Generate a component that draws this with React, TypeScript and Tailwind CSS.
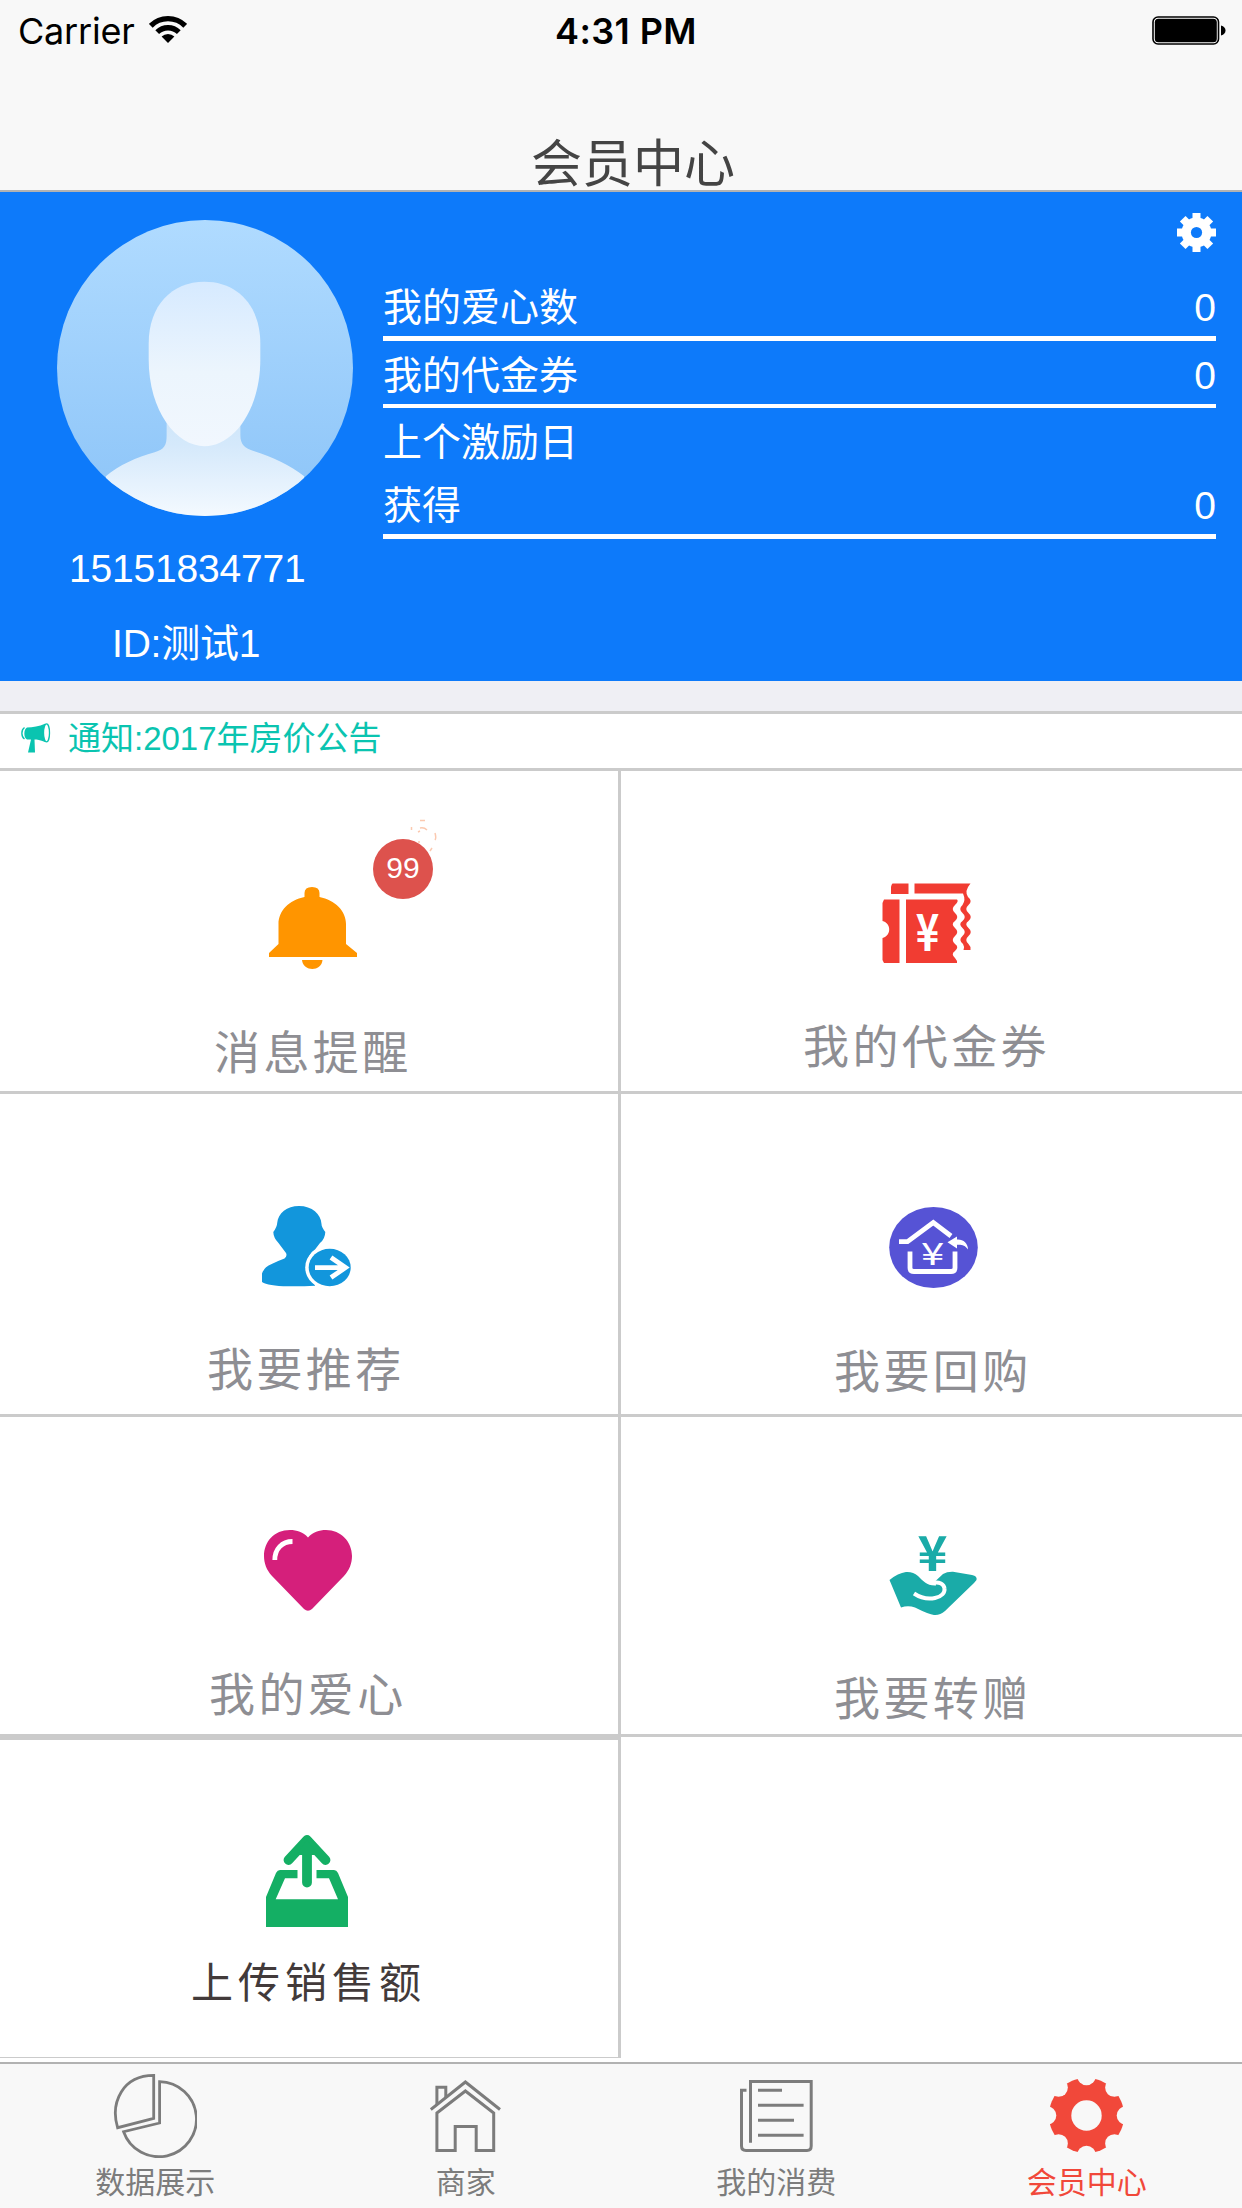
import React from 'react';

const WifiIcon = () => (
  <svg width="38" height="27" viewBox="0 0 38 27" className="mt-4 ml-[14px]">
    <path d="M1.8 9.8A24.3 24.3 0 0 1 36.2 9.8M8.2 16.2A15.3 15.3 0 0 1 29.8 16.2" fill="none" stroke="#000" strokeWidth="5.3" />
    <path d="M12.6 20.6A9 9 0 0 1 25.4 20.6L19 27Z" />
  </svg>
);

const BatteryIcon = () => (
  <svg width="74" height="29" viewBox="0 0 74 29" className="mt-4 ml-auto mr-[16px]">
    <rect x="1" y="1" width="65.5" height="27" rx="5" fill="#fff" stroke="#000" strokeWidth="1.6" />
    <rect x="2.8" y="2.8" width="62" height="23.4" rx="3.5" />
    <path d="M69 9.5C72 10.5 73.5 12 73.5 14.5S72 18.5 69 19.5Z" />
  </svg>
);

const Avatar = () => (
  <svg width="296" height="296" viewBox="0 0 297 297" className="ml-[57px] mt-[28px]">
    <defs>
      <linearGradient id="sky" x1="0" y1="0" x2="0" y2="1">
        <stop offset="0" stopColor="#b0dbff" />
        <stop offset="1" stopColor="#8cc4f8" />
      </linearGradient>
      <linearGradient id="face" x1="0" y1="0" x2="0" y2="1">
        <stop offset="0" stopColor="#d6eaff" />
        <stop offset="0.55" stopColor="#ecf5fd" />
        <stop offset="1" stopColor="#f1f7fe" />
      </linearGradient>
      <linearGradient id="body" x1="0" y1="0" x2="0" y2="1">
        <stop offset="0" stopColor="#cde5fa" />
        <stop offset="0.3" stopColor="#d5e9fb" />
        <stop offset="1" stopColor="#f5faff" />
      </linearGradient>
      <clipPath id="round">
        <circle cx="148.5" cy="148.5" r="148.5" />
      </clipPath>
    </defs>
    <g clipPath="url(#round)">
      <rect width="297" height="297" fill="url(#sky)" />
      <path d="M110 195V216C110 226 108 230 98 233C80 238 62 246 49 257V300H248V257C234 246 216 238 198 232C188 229 184 225 184 216V195Z" fill="url(#body)" />
      <path d="M148 62C181 62 204 86 204 124V140C204 192 176 227 148 227S92 192 92 140V124C92 86 115 62 148 62Z" fill="url(#face)" />
    </g>
  </svg>
);

const SettingsIcon = () => (
  <svg width="39" height="39" viewBox="-19.5 -19.5 39 39" className="ml-auto" fill="#fff">
    {[0, 45, 90, 135].map((deg) => (
      <rect key={deg} x="-4" y="-19.5" width="8" height="39" transform={`rotate(${deg})`} />
    ))}
    <circle r="15" />
    <circle r="5.6" fill="#0d7afa" />
  </svg>
);

const HornIcon = () => (
  <svg width="30" height="30" viewBox="0 0 30 30" className="ml-[21px] mt-[9px]" fill="#0ac4b0">
    <path d="M6 4.5C12 4.5 18 3.5 24 0.8V19C19 17 16 16.5 13.500 16.5L14 29.5H7L10 16.5H6C2.500 15 2.500 6 6 4.5Z" />
    <path d="M3.500 4.5C0 7 0 13.5 3.500 16" fill="none" stroke="#0ac4b0" strokeWidth="1.4" />
    <ellipse cx="25.500" cy="9.900" rx="3" ry="9" fill="#fff" stroke="#0ac4b0" strokeWidth="1.3" />
  </svg>
);

const BellIcon = () => (
  <svg width="88" height="82" viewBox="0 0 88 82" fill="#ff9500">
    <path d="M35.5 6Q35.5 0 43 0Q50.5 0 50.5 6V10C66 13 77 24 77 37V57L88 66V70H0V66L9.5 57V37C9.5 24 20 13 35.5 10Z" />
    <path d="M33 73H53.5C53 79 48 82 43.3 82S33.500 79 33 73Z" />
  </svg>
);

const CouponIcon = () => (
  <svg width="89" height="81" viewBox="0 0 89 81" fill="#f13c32" className="overflow-visible">
    <path d="M10.5 0.5H26.5V11H9V4Q9.5 1 10.5 0.5Z" />
    <path d="M32.5 0.5H88.5Q82 8 86 14Q91 18 86.500 22Q82 26 86.500 30Q91 34 86.500 38Q82 41 86.500 45Q91 49 86.500 53Q82 57 86.500 61L88.500 64V67H81.500Q83 64 81 61Q76 57 80.500 53Q85 49 80.500 45Q76 41 80.500 38Q85 34 80.500 30Q76 26 80.500 22Q84 17 81 10.5H32.5Z" />
    <path d="M2 16.5H17.5V80H2L0.500 77V55C9.5 53 9.5 40 0.500 38V20Z" />
    <path d="M24 16.5H75Q77 18 73 22Q68.500 26 73 30Q77.500 34 73 38Q68.500 41 73 45Q77.500 49 73 53Q68.500 57 73 61Q77.500 64 73 68Q68.500 71 73 75L75 78V80H24Z" />
    <text transform="translate(45.5 67.5) scale(0.78 1)" textAnchor="middle" fontSize="51" className="font-['Noto_Sans_CJK_SC',sans-serif] font-bold" fill="#fff">¥</text>
  </svg>
);

const ReferIcon = () => (
  <svg width="89" height="81" viewBox="0 0 89 81" fill="#1296dc">
    <path d="M37 0C50 0 59 8 59.5 18Q59.5 21 63.3 26Q63 33 58 37L53 43.5C45 48 40 66 53 79V79.7Q40 80.5 26 80.3Q6 80 0 76V67.6Q2 61 9.7 58Q16 55 22.5 52.6Q25.5 50 24 47L16.5 37Q11.5 32 11.3 26Q15 21 15.2 17C16 7 25 0 37 0Z" />
    <ellipse cx="67.7" cy="61.5" rx="24.5" ry="22" fill="#fff" />
    <ellipse cx="67.7" cy="61.5" rx="21" ry="18.7" />
    <path d="M53 61.6H83M69 51.6L83.500 61.6L69 71.6" fill="none" stroke="#fff" strokeWidth="4.8" />
  </svg>
);

const BuybackIcon = () => (
  <svg width="89" height="81" viewBox="0 0 89 81" className="overflow-visible">
    <ellipse cx="44.5" cy="40.5" rx="44.3" ry="40.5" fill="#5653d5" />
    <path d="M10 34.7H18.5L44.3 15.5L62 29M21 44.5V61Q21 64.5 25 64.5H62Q66 64.5 66 61V44.5" fill="none" stroke="#fff" strokeWidth="4.8" />
    <path d="M58.5 35.3L68 29.5V32.5C74 32 79 36 79 42.5C76 38 73 37.5 68 37.7V41.5Z" fill="#fff" />
    <text transform="translate(43.7 58) scale(1.35 1)" textAnchor="middle" fontSize="31" className="font-['Noto_Sans_CJK_SC',sans-serif]" fill="#fff">¥</text>
  </svg>
);

const HeartIcon = () => (
  <svg width="88" height="81" viewBox="0 0 88 81">
    <path d="M44 7.5C39 2 33 0 26 0C10 0 0 12 0 26C0 33 2.5 40 8 46L40 79Q44 82.5 48 79L80 46C85.5 40 88 33 88 26C88 12 77 0 62 0C55 0 49 2 44 7.5Z" fill="#d51f7b" />
    <path d="M10.8 30C10.8 19 18 11.5 28.5 11.5" fill="none" stroke="#fff" strokeWidth="4.8" />
  </svg>
);

const GiftIcon = () => (
  <svg width="88" height="81" viewBox="0 0 88 81" fill="#1aaba8" className="overflow-visible">
    <text transform="translate(43.5 36) scale(1.06 1)" textAnchor="middle" fontSize="48" className="font-['Noto_Sans_CJK_SC',sans-serif] font-bold">¥</text>
    <path d="M0.500 45Q9 38 17 37Q24 36.5 29 41C34 46 38 51 47 50.5L46.5 46L54 39Q58 36.5 64 36.7L83 40Q88.5 41 87.5 45L85 48L56 76Q51 80.5 45 80Q40 79.5 26 72.5Q19 70 12 72.5Z" />
    <path d="M25 58.5C31 62.5 39 64.5 46 63C53 61.5 56 57.5 55.5 53.5C55 48.5 50 47 45.5 47.5" fill="none" stroke="#fff" strokeWidth="4" />
  </svg>
);

const UploadIcon = () => (
  <svg width="82" height="92" viewBox="0 0 82 92" fill="#14af64">
    <path d="M0 62L10 38Q11.5 35 14 35H31.5V43.3H19L9.7 64.3H72L63 43.3H50.5V35H68Q70.5 35 72 38L82 62V92H0Z" />
    <path d="M41 7V47.5M22.5 25L41 5L59.5 25" fill="none" stroke="#14af64" strokeWidth="9.8" strokeLinecap="round" strokeLinejoin="round" />
    <path d="M41 5L52 20H30Z" />
  </svg>
);

const ChartIcon = () => (
  <svg width="84" height="84" viewBox="0 0 84 84" fill="none" stroke="#7c7c7c" strokeWidth="2.8">
    <path d="M40.7 1.4V44.3L4.6 53.7C-3 28 10 1.4 40.7 1.4Z" />
    <path d="M46.6 7.7A37.5 37.5 0 1 1 10.6 57.7L46.6 49Z" />
  </svg>
);

const ShopIcon = () => (
  <svg width="71" height="72" viewBox="0 0 71 72" fill="none" stroke="#7c7c7c" strokeWidth="3">
    <path d="M0.800 29.5L35.4 2L70 29.5" />
    <path d="M6.9 33L35.4 11L63.7 33V70.4H46.2V46.6H25.2V70.4H6.9Z" />
    <path d="M6.9 24.5V7.3H15.8V18" />
  </svg>
);

const BillIcon = () => (
  <svg width="73" height="72" viewBox="0 0 73 72" fill="none" stroke="#7c7c7c" strokeWidth="3">
    <path d="M10.5 62.7V1.5H71.2V66Q71.2 70.4 67 70.4H6Q1.5 70.4 1.5 66V10.3H6.5" />
    <path d="M18 10.3H42M18 25.3H63.6M18 40.3H54M18 55.3H63.6" />
  </svg>
);

const CogIcon = () => (
  <svg width="73" height="73" viewBox="-36 -36 72 72">
    <mask id="cog">
      <circle r="37" fill="#fff" />
      <circle r="15" fill="#000" />
      {[0, 45, 90, 135, 180, 225, 270, 315].map((deg) => (
        <circle key={deg} cy="-39" r="9.2" fill="#000" transform={`rotate(${deg})`} />
      ))}
    </mask>
    <rect x="-36" y="-36" width="72" height="72" fill="#f1483a" mask="url(#cog)" />
  </svg>
);

interface StatRowProps {
  label: string;
  value?: string;
  className: string;
}

const StatRow: React.FC<StatRowProps> = ({ label, value, className }) => (
  <div className={`flex justify-between border-white ${className}`}>
    <span>{label}</span>
    {value && <span>{value}</span>}
  </div>
);

interface MenuCellProps {
  icon: React.ReactNode;
  label: string;
  className: string;
  iconClass: string;
  labelClass: string;
  children?: React.ReactNode;
}

const MenuCell: React.FC<MenuCellProps> = ({ icon, label, className, iconClass, labelClass, children }) => (
  <div className={`relative flex flex-col items-start border-[#cbcbcb] ${className}`}>
    <div className={`flex flex-col justify-end ${iconClass}`}>{icon}</div>
    <div className={`whitespace-nowrap leading-[46px] ${labelClass}`}>{label}</div>
    {children}
  </div>
);

const labelBase = 'text-[46px] tracking-[3.4px] text-[#8e8e93]';

const tabs = [
  { label: '数据展示', icon: <ChartIcon />, color: 'text-[#7c7c7c]' },
  { label: '商家', icon: <ShopIcon />, color: 'text-[#7c7c7c]' },
  { label: '我的消费', icon: <BillIcon />, color: 'text-[#7c7c7c]' },
  { label: '会员中心', icon: <CogIcon />, color: 'text-[#f1483a]' },
];

const App = () => {
  return (
    <div className="flex h-[2208px] w-[1242px] flex-col overflow-hidden bg-white font-['Liberation_Sans','Noto_Sans_CJK_SC',sans-serif]">
      <header className="flex h-48 flex-col border-b-2 border-[#b2b2b2] bg-[#f8f8f8]">
        <div className="grid h-[62px] grid-cols-3 font-['Inter',sans-serif] text-[36px] leading-[62px] text-black">
          <div className="flex pl-[18px]">
            <span className="tracking-[-0.2px]">Carrier</span>
            <WifiIcon />
          </div>
          <div className="pl-[141px] font-semibold tracking-[0.4px]">4:31 PM</div>
          <div className="flex">
            <BatteryIcon />
          </div>
        </div>
        <h1 className="mt-[77px] pl-[531px] text-[51px] leading-[51px] text-[#444]">会员中心</h1>
      </header>

      {/* Profile */}
      <section className="flex h-[489px] shrink-0 bg-[#0d7afa] text-[39px] text-white">
        <div className="flex w-[383px] flex-col">
          <Avatar />
          <div className="mt-[33px] pl-[69px] leading-[39px] tracking-[-0.2px]">15151834771</div>
          <div className="mt-[36px] pl-[112px] leading-[39px] tracking-[-0.2px]">ID:测试1</div>
        </div>
        <div className="w-[833px] pt-[21px]">
          <SettingsIcon />
          <StatRow label="我的爱心数" value="0" className="mt-[24px] h-[65px] border-b-5 leading-[64px]" />
          <StatRow label="我的代金券" value="0" className="h-[67px] border-b-4 leading-[70px]" />
          <StatRow label="上个激励日" className="h-[64px] leading-[70px]" />
          <StatRow label="获得" value="0" className="h-[67px] border-b-5 leading-[67px]" />
        </div>
      </section>

      <div className="h-[30px] shrink-0 bg-[#efeff4]" />

      {/* Notice */}
      <div className="flex h-[60px] shrink-0 border-y-3 border-[#cbcbcb]">
        <HornIcon />
        <span className="ml-[17px] text-[33px] leading-[50px] text-[#0ac4b0]">通知:2017年房价公告</span>
      </div>

      <main className="grid shrink-0 grid-cols-2">
        <MenuCell
          icon={<BellIcon />}
          label="消息提醒"
          className="h-[323px] border-r-3 border-b-3"
          iconClass="h-[198px] ml-[269px]"
          labelClass={`${labelBase} mt-[61px] ml-[214px]`}
        >
          <svg width="27" height="34" viewBox="0 0 27 34" className="absolute top-[48px] left-[410px]" fill="none" stroke="#fbc9b0" strokeWidth="1.5">
            <path d="M10 1.5H15M1.5 8V11M10 9Q14 8 17 11M25 14Q26.5 19 25 21M8 13L10 12M22 29L20 32M9 22V24" />
          </svg>
          <span className="absolute top-[68px] left-[373px] h-[60px] w-[60px] rounded-full bg-[#dd524d] text-center text-[30px] leading-[57px] text-white">99</span>
        </MenuCell>
        <MenuCell
          icon={<CouponIcon />}
          label="我的代金券"
          className="h-[323px] border-b-3"
          iconClass="h-[193px] ml-[261px]"
          labelClass={`${labelBase} mt-[60px] ml-[182px]`}
        />
        <MenuCell
          icon={<ReferIcon />}
          label="我要推荐"
          className="h-[323px] border-r-3 border-b-3"
          iconClass="h-[193px] ml-[262px]"
          labelClass={`${labelBase} mt-[60px] ml-[207px]`}
        />
        <MenuCell
          icon={<BuybackIcon />}
          label="我要回购"
          className="h-[323px] border-b-3"
          iconClass="h-[194px] ml-[268px]"
          labelClass={`${labelBase} mt-[61px] ml-[213px]`}
        />
        <MenuCell
          icon={<HeartIcon />}
          label="我的爱心"
          className="h-[320px] border-r-3 border-b-3"
          iconClass="h-[194px] ml-[264px]"
          labelClass={`${labelBase} mt-[61px] ml-[209px]`}
        />
        <MenuCell
          icon={<GiftIcon />}
          label="我要转赠"
          className="h-[320px] border-b-3"
          iconClass="h-[199px] ml-[268px]"
          labelClass={`${labelBase} mt-[60px] ml-[213px]`}
        />
        <MenuCell
          icon={<UploadIcon />}
          label="上传销售额"
          className="h-[321px] border-t-3 border-r-3 border-b"
          iconClass="h-[187px] ml-[266px]"
          labelClass="mt-[34px] ml-[191px] text-[42px] tracking-[5px] text-[#423a3a]"
        />
      </main>

      <nav className="mt-auto grid h-[146px] shrink-0 grid-cols-4 border-t-2 border-[#b2b2b2] bg-[#f8f8f8]">
        {tabs.map((tab) => (
          <div key={tab.label} className={`flex flex-col items-center ${tab.color}`}>
            <div className="flex h-[103px] items-center">{tab.icon}</div>
            <span className="text-[30px] leading-[32px]">{tab.label}</span>
          </div>
        ))}
      </nav>
    </div>
  );
};

export default App;
